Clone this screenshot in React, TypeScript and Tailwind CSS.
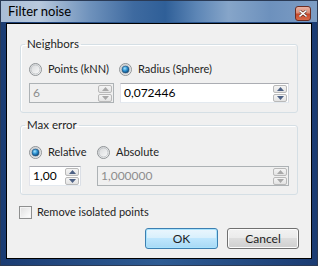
import React from 'react';

const font = { fontFamily: 'Lato, "Noto Sans", sans-serif' };

const Radio: React.FC<{ checked?: boolean }> = ({ checked }) => (
  <svg width="13" height="13" viewBox="0 0 13 13" className="shrink-0">
    <defs>
      <linearGradient id="rbg" x1="0" y1="0" x2="1" y2="1">
        <stop offset="0" stopColor="#d2d4d6" />
        <stop offset="1" stopColor="#ffffff" />
      </linearGradient>
      <radialGradient id="rdot" cx="0.4" cy="0.35" r="0.7">
        <stop offset="0" stopColor="#a6e4ff" />
        <stop offset="0.5" stopColor="#2a8fcf" />
        <stop offset="1" stopColor="#0e3f6c" />
      </radialGradient>
    </defs>
    <circle cx="6.5" cy="6.5" r="6" fill="url(#rbg)" stroke="#8f9396" strokeWidth="1" />
    <circle cx="6.5" cy="6.5" r="4.5" fill="none" stroke="#c4c7ca" strokeWidth="1" />
    {checked && <circle cx="6.5" cy="6.5" r="3.5" fill="url(#rdot)" stroke="#1b4a73" strokeWidth="0.6" />}
  </svg>
);

const Spin: React.FC<{ disabled?: boolean }> = ({ disabled }) => {
  const c = disabled ? '#a8a8a8' : '#4d6185';
  return (
    <div className="flex flex-col gap-[1px] py-[1px] pr-[1px]">
      <div className="w-[14px] h-[8px] border border-[#b9b9b9] rounded-[2px] bg-[linear-gradient(#f5f5f5,#e3e3e3)] flex items-center justify-center">
        <svg width="7" height="4" viewBox="0 0 7 4"><path d="M0 4 L3.5 0 L7 4 Z" fill={c} /></svg>
      </div>
      <div className="w-[14px] h-[8px] border border-[#b9b9b9] rounded-[2px] bg-[linear-gradient(#f5f5f5,#e3e3e3)] flex items-center justify-center">
        <svg width="7" height="4" viewBox="0 0 7 4"><path d="M0 0 L3.5 4 L7 0 Z" fill={c} /></svg>
      </div>
    </div>
  );
};

const SpinBox: React.FC<{ value: string; disabled?: boolean; className?: string }> = ({ value, disabled, className }) => (
  <div
    className={`h-[20px] flex items-center justify-between border ${
      disabled ? 'border-[#adb2b5] bg-[#f0f0f0] text-[#8d8d8d]' : 'border-[#abadb3] border-b-[#e3e9ef] border-l-[#e2e3ea] border-r-[#dbdfe6] bg-white text-black'
    } ${className ?? ''}`}
  >
    <span className="pl-[3px] text-[12px] leading-none">{value}</span>
    <Spin disabled={disabled} />
  </div>
);

const Button: React.FC<{ label: string; primary?: boolean }> = ({ label, primary }) => (
  <div
    className={`h-[21px] flex items-center justify-center rounded-[3px] border text-[12px] ${
      primary
        ? 'w-[73px] border-[#3c7fb1] shadow-[inset_0_0_0_1px_#a9e3fd] bg-[linear-gradient(#eaf6fd_0%,#d9f0fc_45%,#bee6fd_50%,#a7d9f5_100%)]'
        : 'w-[72px] border-[#707070] shadow-[inset_0_0_0_1px_#fcfcfc] bg-[linear-gradient(#f2f2f2_0%,#ebebeb_45%,#dddddd_50%,#cfcfcf_100%)]'
    }`}
  >
    {label}
  </div>
);

export default function App() {
  return (
    <div
      className="w-[318px] h-[266px] flex flex-col border border-[#2a3a55] bg-[linear-gradient(90deg,#1b3c73_0%,#2e5c94_50%,#1b3c73_100%)] text-[#1e1e1e] text-[11px]"
      style={font}
    >
      <div className="h-[21px] flex items-center justify-between pl-[7px] pr-[6px] bg-[linear-gradient(90deg,#a9bdd6_0%,#b8c9dd_12%,#6f92bc_28%,#3e6aa0_42%,#2f5f98_52%,#5d86b6_62%,#86a5c9_72%,#6d91bd_85%,#7d9dc4_100%)]">
        <span className="text-[13px] text-black pt-[1px]">Filter noise</span>
        <div className="w-[16px] h-[15px] mt-[4px] rounded-[3px] border border-[#6c2d22] bg-[linear-gradient(#eab2a3_0%,#d98b76_45%,#c5472b_55%,#d86a4a_100%)] flex items-center justify-center">
          <svg width="8" height="7" viewBox="0 0 8 7">
            <path d="M1 1 L7 6 M7 1 L1 6" stroke="#4a1a10" strokeWidth="2.6" strokeLinecap="square" />
            <path d="M1 1 L7 6 M7 1 L1 6" stroke="#ffffff" strokeWidth="1.6" strokeLinecap="square" />
          </svg>
        </div>
      </div>
      <div className="mt-[1px] mx-[5px] mb-[6px] flex-1 border border-black bg-[#f0f0f0] flex flex-col px-[13px] pt-[12px]">
        <fieldset className="border border-[#d5dfe5] rounded-[3px] px-[8px] pb-[9px] shadow-[inset_1px_1px_0_#ffffff]">
          <legend className="ml-[-4px] px-[2px] text-[11.5px] leading-[16px]">Neighbors</legend>
          <div className="mt-[9px] h-[16px] flex items-center">
            <div className="w-[90px] shrink-0 flex items-center gap-[6px]">
              <Radio />
              <span>Points (kNN)</span>
            </div>
            <div className="flex items-center gap-[6px]">
              <Radio checked />
              <span>Radius (Sphere)</span>
            </div>
          </div>
          <div className="mt-[6px] flex gap-[6px]">
            <SpinBox value="6" disabled className="w-[85px]" />
            <SpinBox value="0,072446" className="flex-1" />
          </div>
        </fieldset>
        <fieldset className="mt-[4px] border border-[#d5dfe5] rounded-[3px] px-[8px] pb-[8px] shadow-[inset_1px_1px_0_#ffffff]">
          <legend className="ml-[-4px] px-[2px] text-[11.5px] leading-[16px]">Max error</legend>
          <div className="mt-[11px] h-[16px] flex items-center">
            <div className="w-[68px] shrink-0 flex items-center gap-[6px]">
              <Radio checked />
              <span>Relative</span>
            </div>
            <div className="flex items-center gap-[6px]">
              <Radio />
              <span>Absolute</span>
            </div>
          </div>
          <div className="mt-[6px] flex gap-[16px]">
            <SpinBox value="1,00" className="w-[52px]" />
            <SpinBox value="1,000000" disabled className="flex-1" />
          </div>
        </fieldset>
        <div className="mt-[10px] ml-[-1px] h-[14px] flex items-center gap-[5px]">
          <div className="w-[13px] h-[13px] border border-[#8e8f8f] bg-[linear-gradient(135deg,#dedede,#ffffff)] shadow-[inset_0_0_0_1px_#f4f4f4]" />
          <span>Remove isolated points</span>
        </div>
        <div className="mt-[9px] flex justify-end gap-[9px] mr-[-1px]">
          <Button label="OK" primary />
          <Button label="Cancel" />
        </div>
      </div>
    </div>
  );
}
